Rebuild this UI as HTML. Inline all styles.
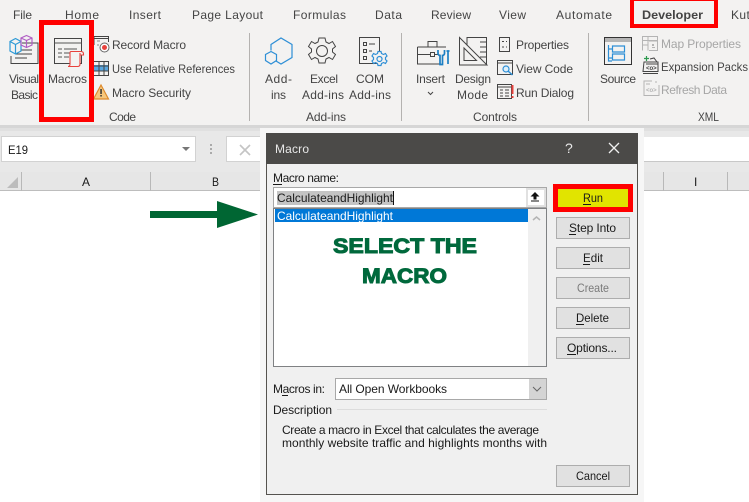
<!DOCTYPE html>
<html><head><meta charset="utf-8"><title>Macro dialog</title>
<style>
html,body{margin:0;padding:0;background:#fff;width:749px;height:502px;overflow:hidden}
svg{display:block}
text{font-family:"Liberation Sans",sans-serif;font-size:12px;fill:#444}
.d text,text.d{fill:#1a1a1a}
text.g{fill:#a6a6a6}
.k{fill:none;stroke:#444;stroke-width:1}
.b{fill:none;stroke:#2e8fd6;stroke-width:1.2}
.btn{fill:#e1e1e1;stroke:#adadad;stroke-width:1}
</style></head><body>
<svg width="749" height="502" viewBox="0 0 749 502" xmlns="http://www.w3.org/2000/svg">
<rect width="749" height="125" fill="#f3f2f1"/>
<rect y="125" width="749" height="47" fill="#e8e8e8"/>
<rect y="125" width="749" height="3" fill="#d6d6d6"/>
<rect y="128" width="749" height="3" fill="#e0e0e0"/>
<rect x="1.5" y="136.5" width="194" height="25" fill="#fff" stroke="#d2d2d2"/>
<text class="d" x="8" y="154" textLength="20" lengthAdjust="spacingAndGlyphs">E19</text>
<path d="M182 147h8l-4 4z" fill="#777"/>
<g fill="#aaa"><rect x="210" y="144" width="2" height="2"/><rect x="210" y="148" width="2" height="2"/><rect x="210" y="152" width="2" height="2"/></g>
<rect x="226.500" y="136.500" width="40" height="25" fill="#fff" stroke="#d2d2d2"/>
<path d="M240 145l10 10M250 145l-10 10" stroke="#c4c4c4" stroke-width="1.600"/>
<rect x="640" y="137" width="109" height="24" fill="#fff"/>
<rect x="640" y="161" width="109" height="1" fill="#c8c8c8"/>
<rect y="172" width="749" height="19" fill="#e6e6e6"/>
<rect y="191" width="749" height="311" fill="#fff"/>
<rect y="190" width="749" height="1" fill="#bdbdbd"/>
<path d="M7 188l11-11v11z" fill="#bcbcbc"/>
<g fill="#b8b8b8"><rect x="21" y="172" width="1" height="19"/><rect x="150" y="172" width="1" height="19"/><rect x="663" y="172" width="1" height="19"/><rect x="727" y="172" width="1" height="19"/></g>
<text class="d" x="82" y="186" textLength="8" lengthAdjust="spacingAndGlyphs">A</text>
<text class="d" x="212" y="186" textLength="7" lengthAdjust="spacingAndGlyphs">B</text>
<text class="d" x="694" y="186">I</text>

<g>
<text x="13" y="19" textLength="19">File</text>
<text x="65" y="19" textLength="34">Home</text>
<text x="129" y="19" textLength="32">Insert</text>
<text x="192" y="19" textLength="71">Page Layout</text>
<text x="293" y="19" textLength="53">Formulas</text>
<text x="375" y="19" textLength="27">Data</text>
<text x="431" y="19" textLength="40">Review</text>
<text x="499" y="19" textLength="27">View</text>
<text x="556" y="19" textLength="56">Automate</text>
<text x="642" y="19" textLength="61" style="font-weight:bold" lengthAdjust="spacingAndGlyphs">Developer</text>
<text x="731" y="19" style="letter-spacing:.4px">Kutools</text>
</g>
<g fill="#b4b2b0"><rect x="249" y="33" width="1" height="88"/><rect x="401" y="33" width="1" height="88"/><rect x="588" y="33" width="1" height="88"/></g>

<!-- Visual Basic icon -->
<path class="k" d="M22 43h16v20.500h-27V56M15 54h17M15 58h12M18 50h14"/>
<path d="M15.500 38.500l5.500 3v9.500l-5.500 3-5.500-3v-9.500zM10 41.500l5.500 3 5.500-3M15.500 44.500v9.500" fill="#f3f2f1" stroke="#2e9ad6" stroke-width="1.200"/>
<path d="M26.500 35.500l5.500 2.500v7l-5.500 2.500-5.500-2.500v-7zM21 38l5.500 2.500 5.500-2.500M26.500 40.500v7" fill="none" stroke="#b05ec4" stroke-width="1.200"/>
<text x="9" y="83" textLength="30">Visual</text>
<text x="11" y="99" textLength="27">Basic</text>

<!-- Macros icon -->
<path d="M54.500 38.500h27v25h-27z" fill="#f3f2f1" stroke="#444"/>
<path d="M54.500 43h27M58 49h4M64 49h13M58 53h4M64 53h7M58 57h4M64 57h5" stroke="#555" fill="none"/>
<path d="M71 51.500h10c1.500 0 2.500 1 2.500 2.500v1H80V64c0 1.500-1 2.500-2.500 2.500h-9.500c1 0 2-.8 2-2.200V53c0-1 .5-1.500 1-1.500zM80 53v2" fill="#f3f2f1" stroke="#e8413c" stroke-width="1.100"/>
<text x="48" y="83" textLength="39">Macros</text>

<!-- small code icons -->
<path class="k" d="M94 45v-8.500h14.500V42M94 38.500h14.500"/>
<path d="M97 41h3M97 45h2" stroke="#888"/>
<circle cx="104.500" cy="47.500" r="4.500" fill="#fff" stroke="#666"/><circle cx="104.500" cy="47.500" r="2.500" fill="#e8413c"/>
<text x="112" y="49" textLength="74">Record Macro</text>
<rect x="94" y="65" width="14.500" height="6" fill="#5aa7e0"/>
<path class="k" d="M94 61.500h14.500v14H94M99 61.500v14M104 61.500v14M94 66h14.500M94 71h14.500"/>
<text x="112" y="73" textLength="123" lengthAdjust="spacingAndGlyphs">Use Relative References</text>
<path d="M101 85l7.500 14h-15z" fill="#f7c77c" stroke="#dd8a2c" stroke-width="1.200"/>
<rect x="100.300" y="89" width="1.500" height="5" fill="#333"/><rect x="100.300" y="95" width="1.500" height="1.500" fill="#333"/>
<text x="112" y="97" textLength="79">Macro Security</text>
<text x="109" y="121" textLength="27">Code</text>

<!-- Add-ins -->
<path d="M271 50.500v-6l10-6.500 11 6.500v13l-11 6.500-5-3" class="b"/>
<path d="M271 51.500l5.500 3v6l-5.500 3.500-5.500-3.500v-6z" class="b"/>
<text x="265" y="83" textLength="27">Add-</text>
<text x="271" y="99" textLength="15">ins</text>
<path class="k" d="M319 38h6l1 4 3 1.500 3.500-2 3 5-3 2.500v3l3 2.500-3 5-3.500-2-3 1.500-1 4h-6l-1-4-3-1.500-3.500 2-3-5 3-2.500v-3l-3-2.500 3-5 3.500 2 3-1.500z"/>
<circle class="k" cx="322" cy="51" r="5.500"/>
<text x="310" y="83" textLength="28">Excel</text>
<text x="302" y="99" textLength="42">Add-ins</text>
<path class="k" d="M380 63.500h-20.500v-26h20v14"/>
<path class="k" d="M363.500 42.500h3v3h-3zM363.500 49.500h3v3h-3zM363.500 56.500h3v3h-3zM369 44h6M369 51h3"/>
<path d="M378 51.500h3l.5 2 2 1 2-1 1.500 2.500-1.500 1.500v2l1.500 1.500-1.500 2.500-2-1-2 1-.5 2h-3l-.5-2-2-1-2 1-1.500-2.500 1.500-1.500v-2l-1.500-1.500 1.500-2.500 2 1 2-1z" class="b" style="fill:#f3f2f1"/>
<circle class="b" cx="379.500" cy="59" r="2.500"/>
<text x="356" y="83" textLength="28">COM</text>
<text x="349" y="99" textLength="42">Add-ins</text>
<text x="306" y="121" textLength="40">Add-ins</text>

<!-- Controls -->
<path class="k" d="M428 47v-5.500h9V47M417.500 47h28.500M417.500 47v17h23M417.500 54.500h13M435 54.500h3M430.500 52.500h4v4h-4z"/>
<path d="M438 50v3.500c0 1 1 2 2 2v9h2.500v-9c1 0 2-1 2-2V50M448 51v13M446.500 51h3" fill="none" stroke="#1c7fc4" stroke-width="1.700"/>
<text x="416" y="83" textLength="29">Insert</text>
<path d="M428 92l2.500 2.500 2.500-2.500" class="k"/>
<path class="k" d="M459.500 37.500v27.500h27.500zM464 48v12.500h12.500z"/>
<path class="k" d="M467 45.500v-8h19.500v27M480 42h6M480 47h6M480 52h6M480 57h6"/>
<text x="455" y="83" textLength="36">Design</text>
<text x="457" y="99" textLength="31">Mode</text>
<path class="k" d="M499.500 37.500h10v14h-10zM502 41.500h2M506 41.500h1M502 47h2M506 47h1"/>
<text x="516" y="49" textLength="53">Properties</text>
<path class="k" d="M497.500 60.500h15v14h-15zM497.500 63h15"/>
<circle cx="506" cy="69" r="3" fill="#dff0fb" stroke="#2e8fd6" stroke-width="1.200"/><path d="M508 71l4.500 4" stroke="#2e8fd6" stroke-width="1.500"/>
<text x="516" y="73" textLength="57">View Code</text>
<path class="k" d="M497.500 84.500h14v14h-14zM497.500 87h14M500 90h3M505 90h4M500 93h3M505 93h4M500 96h3M505 96h4"/>
<rect x="511.500" y="85" width="2" height="9" fill="#e8413c"/><rect x="511.500" y="96" width="2" height="2" fill="#e8413c"/>
<text x="516" y="97" textLength="58">Run Dialog</text>
<text x="473" y="121" textLength="44">Controls</text>

<!-- XML -->
<rect x="604.500" y="37.500" width="27" height="27" fill="#f3f2f1" stroke="#333"/>
<rect x="605" y="38" width="26" height="4" fill="#b5b5b5"/>
<path d="M608.500 45v16h3.500M608.500 49h3.500M608.500 58h3.500M612.500 46h12v6h-12zM612.500 54h12v6h-12z" fill="none" stroke="#2e8fd6" stroke-width="1.200"/>
<text x="600" y="83" textLength="36">Source</text>
<path d="M642.500 50.500v-14h15v4h-15M648 36.500v14M642.500 45h5.500M649 41h8.500v9.500H649" fill="none" stroke="#b4b4b4"/>
<rect x="652" y="44" width="2" height="2" fill="#b4b4b4"/><rect x="652" y="47" width="3" height="1" fill="#b4b4b4"/>
<text class="g" x="661" y="48" textLength="80">Map Properties</text>
<path d="M646 64h12M644 62h14v9.500h-15zM643 73.500h15" fill="none" stroke="#444"/>
<path d="M650 59l4-1 3 4" class="k"/>
<path d="M644 58.500h5M646.500 56v5" stroke="#2e9a4f" stroke-width="1.200"/>
<text x="646" y="70" style="font-size:6px;font-weight:bold">&lt;o&gt;</text>
<text x="661" y="71" textLength="87" lengthAdjust="spacingAndGlyphs">Expansion Packs</text>
<path d="M652 81h-8v14.500h15V85" fill="none" stroke="#b4b4b4"/>
<path d="M646 84h4M656 81v2" stroke="#b4b4b4"/>
<text x="646" y="92" style="font-size:6px;font-weight:bold;fill:#b4b4b4">&lt;o&gt;</text>
<text class="g" x="661" y="94" textLength="66">Refresh Data</text>
<text x="698" y="121" textLength="21" lengthAdjust="spacingAndGlyphs">XML</text>

<!-- red boxes -->
<rect x="41.500" y="22.500" width="50" height="97" fill="none" stroke="#f00" stroke-width="5"/>
<rect x="632" y="-1" width="84" height="27" fill="none" stroke="#f00" stroke-width="4"/>

<!-- Arrow -->
<rect x="150" y="211" width="68" height="7" fill="#006633"/>
<path d="M217 201l41 13.500-41 13.500z" fill="#006633"/>

<!-- Dialog -->
<rect x="260" y="128" width="384" height="374" fill="#f6f6f6"/>
<rect x="266.500" y="133.500" width="371" height="361" fill="#f0f0f0" stroke="#55534f"/>
<rect x="266" y="133" width="372" height="31" fill="#4b4a48"/>
<text x="275" y="153" style="fill:#e8e8e8" textLength="34">Macro</text>
<text x="565" y="153" style="fill:#e8e8e8;font-size:14px">?</text>
<path d="M609 143l10 10M619 143l-10 10" stroke="#f0f0f0" stroke-width="1.300"/>

<g class="d">
<text x="273" y="182" textLength="66">Macro name:</text>
<rect x="273" y="184" width="9" height="1" fill="#1a1a1a"/>

<rect x="273.500" y="187.500" width="273" height="20" fill="#fff" stroke="#a8a8a8"/>
<rect x="277" y="191" width="116" height="14" fill="#c4c4c4"/>
<text x="277" y="202" textLength="116" lengthAdjust="spacingAndGlyphs">CalculateandHighlight</text>
<rect x="393" y="191" width="1" height="14" fill="#111"/>
<rect x="526" y="188" width="20" height="19" fill="#e1e1e1"/>
<rect x="528" y="190" width="16" height="15" fill="#fff"/>
<path d="M535 192l-4.500 4.500h3v3h3v-3h3z" fill="#111"/><rect x="531" y="200.500" width="8" height="1" fill="#111"/>

<rect x="273.500" y="208.500" width="273" height="158" fill="#fff" stroke="#7f8183"/>
<rect x="528" y="209" width="18" height="157" fill="#f0f0f0"/>
<rect x="275" y="209" width="253" height="13" fill="#0078d7"/>
<text x="277" y="220" textLength="116" lengthAdjust="spacingAndGlyphs" style="fill:#fff">CalculateandHighlight</text>
<path d="M533 220l3.500-3 3.500 3" fill="none" stroke="#b4b4b4" stroke-width="1.500"/>
<text x="333" y="253" textLength="144" lengthAdjust="spacingAndGlyphs" style="font-size:21px;font-weight:bold;fill:#00693c;stroke:#00693c;stroke-width:1">SELECT THE</text>
<text x="362" y="283" textLength="85" lengthAdjust="spacingAndGlyphs" style="font-size:21px;font-weight:bold;fill:#00693c;stroke:#00693c;stroke-width:1">MACRO</text>

<rect x="553" y="184" width="80" height="28" fill="#f00"/>
<rect x="558" y="189" width="70" height="18" fill="#e1e400"/>
<text x="583" y="202" textLength="20" lengthAdjust="spacingAndGlyphs">Run</text><rect x="583" y="204" width="8" height="1" fill="#1a1a1a"/>

<rect class="btn" x="556.500" y="217.500" width="73" height="21"/>
<text x="569" y="232" textLength="47">Step Into</text><rect x="569" y="234" width="7" height="1" fill="#1a1a1a"/>
<rect class="btn" x="556.500" y="247.500" width="73" height="21"/>
<text x="583" y="262" textLength="20" lengthAdjust="spacingAndGlyphs">Edit</text><rect x="583" y="264" width="7" height="1" fill="#1a1a1a"/>
<rect class="btn" x="556.500" y="277.500" width="73" height="21"/>
<text x="577" y="292" textLength="32" lengthAdjust="spacingAndGlyphs" style="fill:#7a7a7a">Create</text>
<rect class="btn" x="556.500" y="307.500" width="73" height="21"/>
<text x="576" y="322" textLength="33" lengthAdjust="spacingAndGlyphs">Delete</text><rect x="576" y="324" width="8" height="1" fill="#1a1a1a"/>
<rect class="btn" x="556.500" y="337.500" width="73" height="21"/>
<text x="567" y="352" textLength="50">Options...</text><rect x="567" y="354" width="9" height="1" fill="#1a1a1a"/>

<text x="273" y="393" textLength="52">Macros in:</text><rect x="282" y="395" width="6" height="1" fill="#1a1a1a"/>
<rect x="335.500" y="378.500" width="211" height="21" fill="#fff" stroke="#a8a8a8"/>
<rect x="529" y="379" width="17" height="20" fill="#d4d4d4"/>
<path d="M533 387l4 4 4-4" fill="none" stroke="#666" stroke-width="1"/>
<text x="339" y="393" textLength="108">All Open Workbooks</text>
<text x="273" y="414" textLength="59">Description</text>
<rect x="337" y="409" width="210" height="1" fill="#dcdcdc"/>
<text x="282" y="434" textLength="257">Create a macro in Excel that calculates the average</text>
<text x="282" y="447" textLength="265">monthly website traffic and highlights months with</text>
<rect class="btn" x="556.500" y="465.500" width="73" height="21"/>
<text x="576" y="480" textLength="34" lengthAdjust="spacingAndGlyphs">Cancel</text>
</g>
</svg>
</body></html>
